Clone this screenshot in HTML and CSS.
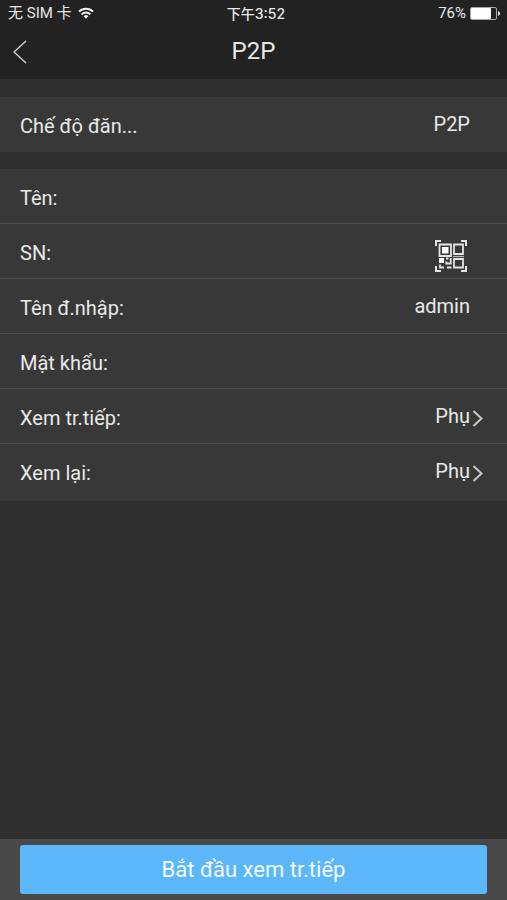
FILE: index.html
```html
<!DOCTYPE html>
<html lang="vi">
<head>
<meta charset="utf-8">
<meta name="viewport" content="width=device-width, initial-scale=1">
<title>P2P</title>
<link rel="stylesheet" href="styles.css">
</head>
<body>
<header class="top">
  <div class="status">
    <div class="status-left" lang="zh">
      <span>无 SIM 卡</span>
      <svg width="16" height="12" viewBox="0 0 16 12" fill="none" stroke="#f2f2f2" stroke-width="2" aria-hidden="true">
        <path d="M1 4.600a10 10 0 0 1 14 0M3.600 7.400a6.200 6.200 0 0 1 8.800 0"/>
        <path d="M8 11.700 5.600 9.300a3.400 3.400 0 0 1 4.800 0z" fill="#f2f2f2" stroke="none"/>
      </svg>
    </div>
    <span class="time" lang="zh">下午3:52</span>
    <div class="status-right">
      <span>76%</span>
      <svg width="30" height="13" viewBox="0 0 30 13" aria-hidden="true">
        <rect x=".5" y=".5" width="26" height="12" rx="1.500" fill="none" stroke="#aaa"/>
        <rect x="1" y="1" width="20" height="11" rx="1" fill="#fff"/>
        <path d="M28 4c1.300.4 2 1.200 2 2.500s-.7 2.100-2 2.500z" fill="#ddd"/>
      </svg>
    </div>
  </div>
  <nav class="bar">
    <button class="back" type="button" aria-label="Back">
      <svg width="14" height="24" viewBox="0 0 14 24" fill="none" stroke="#d0d0d0" stroke-width="1.500" aria-hidden="true"><path d="M13 1 1 12l12 11"/></svg>
    </button>
    <h1>P2P</h1>
  </nav>
</header>
<form class="form">
  <div class="group">
    <div class="row"><label for="mode">Chế độ đăn...</label><output class="value" id="mode">P2P</output></div>
  </div>
  <div class="group fields">
    <div class="row"><label for="name">Tên:</label><input class="value" id="name" type="text"></div>
    <div class="row">
      <label for="sn">SN:</label><input class="value" id="sn" type="text">
      <button class="scan" type="button" aria-label="QR">
        <svg width="32" height="32" viewBox="0 0 32 32" fill="none" stroke="#e4e4e4" aria-hidden="true">
          <path stroke-width="2" d="M1 6V1h5M26 1h5v5M31 26v5h-5M6 31H1v-5"/>
          <path stroke-width="1.800" d="M4.500 4.500h11.500v11.500H4.500zM19 4.500h9v9.500h-9zM19 19h9v8.500h-9z"/>
          <path stroke-width="1.200" stroke="#b8b8b8" d="M18 16.500h11"/>
          <path fill="#fff" stroke="none" d="M7 7h6.500v6.500H7zM4 18h5v5H4z"/>
          <path stroke-width="1.800" d="M11 18.500h2.500M15.800 18v5.500h-4.500v-2M5 24.500v3h4M12 27.500h4.500"/>
        </svg>
      </button>
    </div>
    <div class="row"><label for="user">Tên đ.nhập:</label><input class="value" id="user" type="text" value="admin"></div>
    <div class="row"><label for="pass">Mật khẩu:</label><input class="value" id="pass" type="password"></div>
    <div class="row pick">
      <label for="live">Xem tr.tiếp:</label><select class="value" id="live"><option>Phụ</option></select>
      <svg width="11" height="17" viewBox="0 0 11 17" fill="none" stroke="#c8c8c8" stroke-width="2" aria-hidden="true"><path d="m1.500 1 8 7.500-8 7.500"/></svg>
    </div>
    <div class="row pick">
      <label for="replay">Xem lại:</label><select class="value" id="replay"><option>Phụ</option></select>
      <svg width="11" height="17" viewBox="0 0 11 17" fill="none" stroke="#c8c8c8" stroke-width="2" aria-hidden="true"><path d="m1.500 1 8 7.500-8 7.500"/></svg>
    </div>
  </div>
  <footer class="foot"><button class="start" type="submit">Bắt đầu xem tr.tiếp</button></footer>
</form>
</body>
</html>
```
FILE: styles.css
```css
* { box-sizing: border-box; }
body {
  margin: 0;
  min-height: 100vh;
  display: flex;
  flex-direction: column;
  background: #2f2f2f;
  color: #e8e8e8;
  font: 20px/28px Roboto, "Noto Sans CJK SC", sans-serif;
}
button, input, select {
  margin: 0;
  padding: 0;
  border: 0;
  background: none;
  color: inherit;
  font: inherit;
  appearance: none;
}
svg { display: block; flex: none; }
.top { background: #222; }
.status {
  display: grid;
  grid-template-columns: 1fr auto 1fr;
  align-items: center;
  height: 27px;
  padding: 0 7px 0 8px;
  font-size: 15px;
  line-height: 27px;
}
.status-left, .status-right { display: flex; align-items: center; gap: 6px; }
.status-left svg { margin-bottom: 2px; }
.status-right { justify-content: flex-end; gap: 4px; }
.time { padding-left: 4px; font-family: Inter, "Noto Sans CJK SC", sans-serif; font-size: 14px; font-weight: 500; }
.bar {
  display: grid;
  grid-template-columns: 40px 1fr 40px;
  align-items: center;
  height: 52px;
  padding-bottom: 4px;
}
.back { padding: 2px 13px 0; }
h1 { margin: 0; font-size: 24px; font-weight: 400; text-align: center; }
.form { flex: 1; display: flex; flex-direction: column; }
.group { margin-top: 18px; background: #383838; }
.fields { margin-top: 17px; padding-bottom: 2px; }
.row {
  display: flex;
  align-items: center;
  height: 55px;
  padding: 0 37px 0 20px;
  border-bottom: 1px solid #4e4e4e;
}
.row:last-child { border-bottom-color: transparent; }
label { flex: none; padding-top: 4px; }
.value { flex: 1; min-width: 0; text-align: right; text-align-last: right; }
.pick { padding-right: 24px; gap: 2px; }
.pick svg { margin-top: 4px; }
.scan { margin: 10px 3px 0 0; }
.foot { margin-top: auto; padding: 6px 20px; background: #484848; }
.start {
  width: 100%;
  height: 49px;
  border-radius: 3px;
  background: #5cb6fa;
  color: #f4faff;
  font-size: 22px;
}
```
